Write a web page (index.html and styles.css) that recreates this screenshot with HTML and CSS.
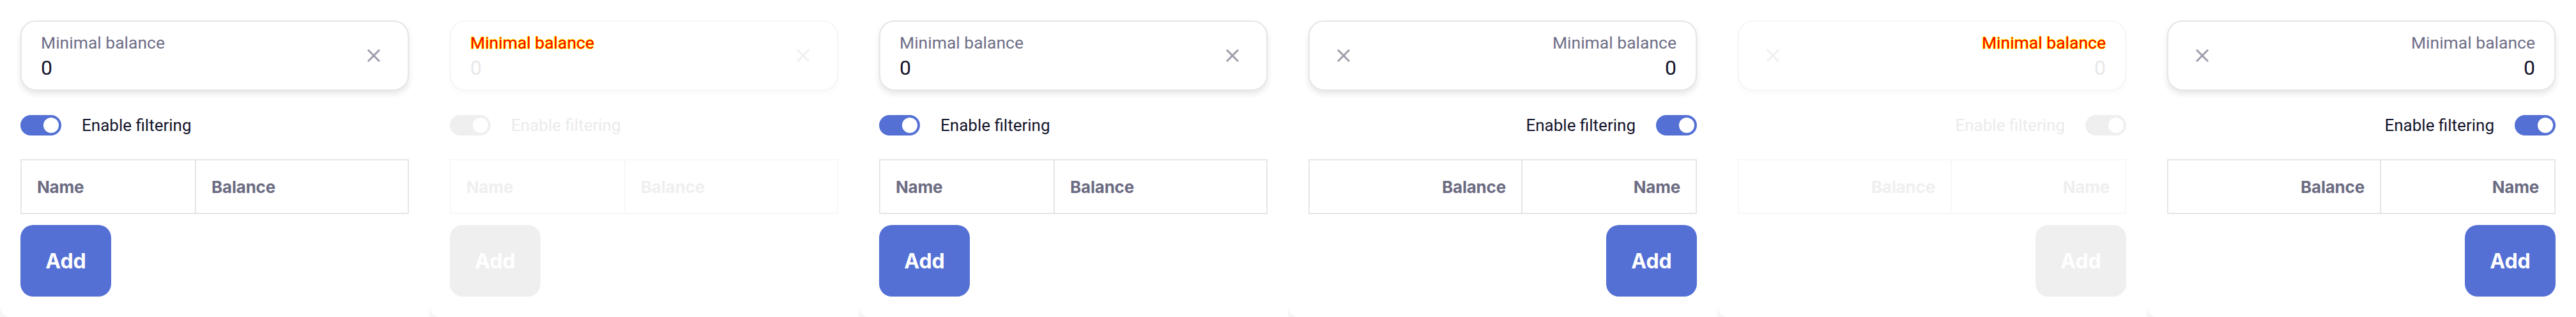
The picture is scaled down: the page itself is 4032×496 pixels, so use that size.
FILE: index.html
```html
<!DOCTYPE html>
<html lang="en">
<head>
<meta charset="utf-8">
<title>Minimal balance filter</title>
<link rel="stylesheet" href="styles.css">
</head>
<body>
<main class="row">
  <section class="panel">
    <div class="field">
      <div class="field-text">
        <span class="label">Minimal balance</span>
        <span class="value">0</span>
      </div>
      <svg class="clear" viewBox="0 0 20 20" width="20" height="20"><path d="M1 1 L19 19 M19 1 L1 19"/></svg>
    </div>
    <div class="switch-row">
      <span class="switch"><span class="knob"></span></span>
      <span class="switch-label">Enable filtering</span>
    </div>
    <table class="grid">
      <thead><tr><th class="col-name">Name</th><th>Balance</th></tr></thead>
    </table>
    <div class="actions"><button class="add">Add</button></div>
  </section>

  <section class="panel disabled">
    <div class="field">
      <div class="field-text">
        <span class="label">Minimal balance</span>
        <span class="value">0</span>
      </div>
      <svg class="clear" viewBox="0 0 20 20" width="20" height="20"><path d="M1 1 L19 19 M19 1 L1 19"/></svg>
    </div>
    <div class="switch-row">
      <span class="switch"><span class="knob"></span></span>
      <span class="switch-label">Enable filtering</span>
    </div>
    <table class="grid">
      <thead><tr><th class="col-name">Name</th><th>Balance</th></tr></thead>
    </table>
    <div class="actions"><button class="add">Add</button></div>
  </section>

  <section class="panel">
    <div class="field">
      <div class="field-text">
        <span class="label">Minimal balance</span>
        <span class="value">0</span>
      </div>
      <svg class="clear" viewBox="0 0 20 20" width="20" height="20"><path d="M1 1 L19 19 M19 1 L1 19"/></svg>
    </div>
    <div class="switch-row">
      <span class="switch"><span class="knob"></span></span>
      <span class="switch-label">Enable filtering</span>
    </div>
    <table class="grid">
      <thead><tr><th class="col-name">Name</th><th>Balance</th></tr></thead>
    </table>
    <div class="actions"><button class="add">Add</button></div>
  </section>

  <section class="panel rtl">
    <div class="field">
      <div class="field-text">
        <span class="label">Minimal balance</span>
        <span class="value">0</span>
      </div>
      <svg class="clear" viewBox="0 0 20 20" width="20" height="20"><path d="M1 1 L19 19 M19 1 L1 19"/></svg>
    </div>
    <div class="switch-row">
      <span class="switch"><span class="knob"></span></span>
      <span class="switch-label">Enable filtering</span>
    </div>
    <table class="grid">
      <thead><tr><th class="col-name">Name</th><th>Balance</th></tr></thead>
    </table>
    <div class="actions"><button class="add">Add</button></div>
  </section>

  <section class="panel rtl disabled">
    <div class="field">
      <div class="field-text">
        <span class="label">Minimal balance</span>
        <span class="value">0</span>
      </div>
      <svg class="clear" viewBox="0 0 20 20" width="20" height="20"><path d="M1 1 L19 19 M19 1 L1 19"/></svg>
    </div>
    <div class="switch-row">
      <span class="switch"><span class="knob"></span></span>
      <span class="switch-label">Enable filtering</span>
    </div>
    <table class="grid">
      <thead><tr><th class="col-name">Name</th><th>Balance</th></tr></thead>
    </table>
    <div class="actions"><button class="add">Add</button></div>
  </section>

  <section class="panel rtl">
    <div class="field">
      <div class="field-text">
        <span class="label">Minimal balance</span>
        <span class="value">0</span>
      </div>
      <svg class="clear" viewBox="0 0 20 20" width="20" height="20"><path d="M1 1 L19 19 M19 1 L1 19"/></svg>
    </div>
    <div class="switch-row">
      <span class="switch"><span class="knob"></span></span>
      <span class="switch-label">Enable filtering</span>
    </div>
    <table class="grid">
      <thead><tr><th class="col-name">Name</th><th>Balance</th></tr></thead>
    </table>
    <div class="actions"><button class="add">Add</button></div>
  </section>
</main>
</body>
</html>
```

FILE: styles.css
```css
* { box-sizing: border-box; }

html, body {
  margin: 0;
  padding: 0;
  background: #f7f7f8;
}

body {
  font-family: Inter, "Noto Sans", "Liberation Sans", sans-serif;
  color: #14142b;
}

.row {
  display: grid;
  grid-template-columns: repeat(6, 672px);
  height: 496px;
  overflow: hidden;
}

.panel {
  background: #ffffff;
  height: 496px;
  padding: 32px;
  border-radius: 0 0 0 18px;
  display: flex;
  flex-direction: column;
}

.rtl { direction: rtl; }

/* ---------- text field ---------- */
.field {
  height: 110px;
  border: 2px solid #e6e6e9;
  border-radius: 24px;
  box-shadow: 0 5px 10px rgba(20, 20, 43, 0.10);
  display: flex;
  align-items: stretch;
  padding-inline-start: 30px;
  padding-inline-end: 43px;
  background: #fff;
}

.field-text {
  flex: 1;
  display: flex;
  flex-direction: column;
  padding-top: 16px;
  font-family: Roboto, Inter, sans-serif;
}

.label {
  font-size: 26.5px;
  line-height: 34px;
  font-weight: 400;
  color: #6e6e86;
}

.value {
  font-size: 32px;
  line-height: 40px;
  margin-top: 2px;
  color: #14142b;
}

.clear {
  align-self: center;
  flex: none;
  fill: none;
  stroke: #9e9eac;
  stroke-width: 3;
  stroke-linecap: butt;
}

/* ---------- switch ---------- */
.switch-row {
  margin-top: 38px;
  height: 32px;
  display: flex;
  align-items: center;
  gap: 32px;
}

.switch {
  direction: ltr;
  width: 64px;
  height: 32px;
  border-radius: 16px;
  background: #5470d4;
  display: flex;
  justify-content: flex-end;
  align-items: center;
  padding: 4px;
  flex: none;
}

.knob {
  width: 24px;
  height: 24px;
  border-radius: 50%;
  background: #ffffff;
}

.switch-label {
  font-family: Roboto, Inter, sans-serif;
  font-size: 26px;
  line-height: 32px;
  color: #14142b;
}

/* ---------- table ---------- */
.grid {
  margin-top: 37px;
  width: 100%;
  border-collapse: collapse;
  height: 86px;
}

.grid th {
  border: 2px solid #e6e6e9;
  padding: 0 24px;
  text-align: start;
  font-size: 26px;
  font-weight: 700;
  color: #6b6b82;
  letter-spacing: -0.2px;
}

.grid th.col-name { width: 273px; }

/* ---------- button ---------- */
.actions {
  margin-top: 17px;
  display: flex;
}

.add {
  height: 112px;
  width: 142px;
  border: none;
  border-radius: 20px;
  background: #5470d4;
  color: #ffffff;
  font-family: inherit;
  font-size: 32px;
  font-weight: 700;
  padding: 0;
}

/* ---------- disabled state ---------- */
.disabled .field {
  border-color: #f6f6f7;
  box-shadow: 0 5px 10px rgba(20, 20, 43, 0.025);
}

.disabled .label {
  color: #ff0000;
  text-shadow: 1px 0 #ffff00, -1px 0 #ffff00, 0 1px #ffff00, 0 -1px #ffff00;
}

.disabled .value { color: #e8e8ea; }
.disabled .clear { stroke: #f0f0f1; }
.disabled .switch { background: #efefef; }
.disabled .switch-label { color: #ebebeb; }
.disabled .grid th { border-color: #f7f7f7; color: #efefef; }
.disabled .add { background: #efefef; color: #ffffff; }
```
